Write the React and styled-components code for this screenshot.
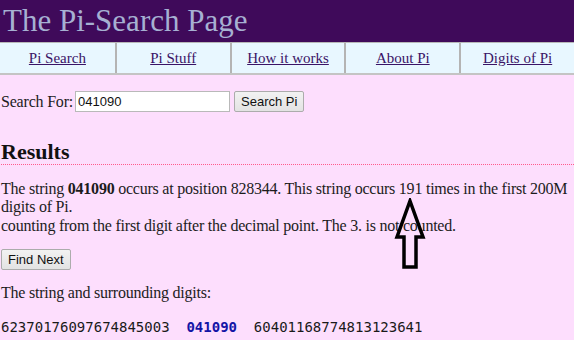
import styled, { createGlobalStyle } from 'styled-components';

const GlobalStyle = createGlobalStyle`
body {
  margin: 0;
  background: #fddefd;
  font-family: "Liberation Serif", "Times New Roman", serif;
  color: #1c1c1c;
}
`

const Header = styled.header`
  background: #3f0a5a;
  height: 42px;
  padding-left: 3px;
  font-size: 31px;
  line-height: 42px;
  color: #a6b0d2;
`

const Nav = styled.nav`
  display: grid;
  grid-template-columns: repeat(5, 1fr);
  background: #e8f7ff;
  border-top: 1px solid #b8b8b8;
  border-bottom: 2px solid #c4c4c4;
`

const NavCell = styled.div`
  height: 30px;
  display: flex;
  align-items: center;
  justify-content: center;
  border-left: ${({first}) => first ? 'none' : '2px solid #b4b4b4'};
`

const NavLink = styled.a`
  font-size: 15px;
  color: #3a1366;
  text-decoration: underline;
  cursor: pointer;
`

const Main = styled.main`
  position: relative;
  padding: 16px 0 0 1px;
`

const SearchRow = styled.form`
  display: flex;
  align-items: center;
  margin: 0;
  font-size: 16px;
  letter-spacing: -0.2px;
`

const Input = styled.input`
  margin-left: 2px;
  width: 155px;
  height: 21px;
  box-sizing: border-box;
  border: 1px solid #b9b9b9;
  padding: 0 2px;
  font-family: "Liberation Sans", Arial, sans-serif;
  font-size: 13px;
  letter-spacing: 0;
  color: #111;
  background: #fff;
`

const Button = styled.button`
  margin-left: ${({ml}) => ml || '0'};
  height: 21px;
  padding: 0 6px;
  border: 1px solid #acacac;
  border-radius: 2px;
  background: linear-gradient(#f2f2f2, #e3e3e3);
  font-family: "Liberation Sans", Arial, sans-serif;
  font-size: 13px;
  letter-spacing: 0;
  color: #111;
`

const Heading = styled.h2`
  margin: 27px 0 0;
  font-size: 22px;
  line-height: 25px;
  font-weight: bold;
  color: #111;
  border-bottom: 1px dotted #ff5a8c;
`

const Para = styled.p`
  margin: ${({m}) => m || '15px 0 0'};
  font-size: 16px;
  line-height: 18.4px;
  letter-spacing: -0.23px;
`

const Digits = styled.pre`
  margin: 16px 0 0;
  font-family: "DejaVu Sans Mono", "Liberation Mono", monospace;
  font-size: 14px;
  line-height: 17px;
  color: #1a1a1a;
`

const Hit = styled.span`
  color: #1414a6;
  font-weight: bold;
`

const Arrow = styled.svg`
  position: absolute;
  left: 394px;
  top: 123px;
`

const links = ['Pi Search', 'Pi Stuff', 'How it works', 'About Pi', 'Digits of Pi']

export default function App() {
  return (
    <>
      <GlobalStyle />
      <Header>The Pi-Search Page</Header>
      <Nav>
        {links.map((l, i) => (
          <NavCell key={l} first={i === 0}>
            <NavLink>{l}</NavLink>
          </NavCell>
        ))}
      </Nav>
      <Main>
        <SearchRow onSubmit={e => e.preventDefault()}>
          Search For:<Input defaultValue="041090" />
          <Button ml="4px">Search Pi</Button>
        </SearchRow>
        <Heading>Results</Heading>
        <Para>
          The string <b>041090</b> occurs at position 828344. This string occurs 191 times in the first 200M digits of Pi.
          <br />
          counting from the first digit after the decimal point. The 3. is not counted.
        </Para>
        <Para m="14px 0 0"><Button>Find Next</Button></Para>
        <Para m="14px 0 0">The string and surrounding digits:</Para>
        <Digits>62370176097674845003  <Hit>041090</Hit>  60401168774813123641</Digits>
        <Arrow width="32" height="72" viewBox="0 0 32 72">
          <path d="M16 3 L29 39 L22 39 L22 69 L10 69 L10 39 L3 39 Z" fill="none" stroke="#000" strokeWidth="3.5" strokeLinejoin="miter" />
        </Arrow>
      </Main>
    </>
  )
}
